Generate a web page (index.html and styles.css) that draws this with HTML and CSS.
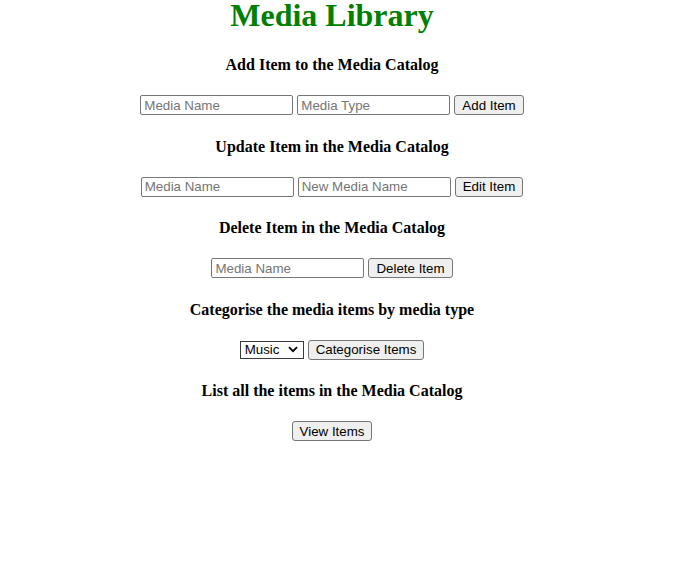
FILE: index.html
```html
<!DOCTYPE html>
<html lang="en">
<head>
<meta charset="utf-8">
<title>Media Library</title>
<link rel="stylesheet" href="styles.css">
</head>
<body>
<main class="page">
  <h1 class="title">Media Library</h1>

  <h3 class="section-title">Add Item to the Media Catalog</h3>
  <div class="row">
    <input class="field" type="text" placeholder="Media Name">
    <input class="field" type="text" placeholder="Media Type">
    <button class="btn" type="button">Add Item</button>
  </div>

  <h3 class="section-title">Update Item in the Media Catalog</h3>
  <div class="row">
    <input class="field" type="text" placeholder="Media Name">
    <input class="field" type="text" placeholder="New Media Name">
    <button class="btn" type="button">Edit Item</button>
  </div>

  <h3 class="section-title">Delete Item in the Media Catalog</h3>
  <div class="row">
    <input class="field" type="text" placeholder="Media Name">
    <button class="btn" type="button">Delete Item</button>
  </div>

  <h3 class="section-title">Categorise the media items by media type</h3>
  <div class="row">
    <select class="picker">
      <option>Music</option>
      <option>Movie</option>
      <option>Book</option>
    </select>
    <button class="btn" type="button">Categorise Items</button>
  </div>

  <h3 class="section-title">List all the items in the Media Catalog</h3>
  <div class="row">
    <button class="btn" type="button">View Items</button>
  </div>
</main>
</body>
</html>
```

FILE: styles.css
```css
html, body {
  margin: 0;
  padding: 0;
  background: #ffffff;
}

body {
  font-family: "Liberation Serif", "Times New Roman", serif;
  color: #000000;
}

.page {
  width: 648px;
  margin: 0 0 0 8px;
  text-align: center;
}

.title {
  margin: 0 0 23px;
  font-size: 32px;
  line-height: 31px;
  font-weight: bold;
  color: #008000;
}

.section-title {
  font-size: 16px;
  font-weight: bold;
  margin: 19px 0;
  line-height: 21px;
}

.row {
  display: flex;
  justify-content: center;
  align-items: center;
  gap: 4px;
  height: 22.5px;
}

.field {
  box-sizing: border-box;
  width: 153px;
  height: 20px;
  margin: 0;
  padding: 1px 3px;
  border: 1px solid #767676;
  border-radius: 2px;
  font-family: "Liberation Sans", Arial, sans-serif;
  font-size: 13.33px;
  color: #000;
  background: #fff;
}

.field::placeholder {
  color: #757575;
}

.btn {
  box-sizing: border-box;
  height: 20px;
  margin: 0;
  padding: 1px 7px;
  border: 1px solid #767676;
  border-radius: 3px;
  background: #efefef;
  font-family: "Liberation Sans", Arial, sans-serif;
  font-size: 13.33px;
  color: #000;
}

.picker {
  box-sizing: border-box;
  appearance: none;
  -webkit-appearance: none;
  width: 64px;
  height: 18px;
  margin: 0;
  padding: 0 0 0 4px;
  border: 1px solid #3b3b3b;
  border-radius: 0;
  background-color: #fff;
  background-image: url("data:image/svg+xml;utf8,<svg xmlns='http://www.w3.org/2000/svg' width='10' height='7' viewBox='0 0 10 7'><path d='M1 1.2 L5 5.2 L9 1.2' fill='none' stroke='black' stroke-width='1.8'/></svg>");
  background-repeat: no-repeat;
  background-position: right 5px center;
  font-family: "Liberation Sans", Arial, sans-serif;
  font-size: 13.33px;
  color: #000;
  text-align: left;
}
```
